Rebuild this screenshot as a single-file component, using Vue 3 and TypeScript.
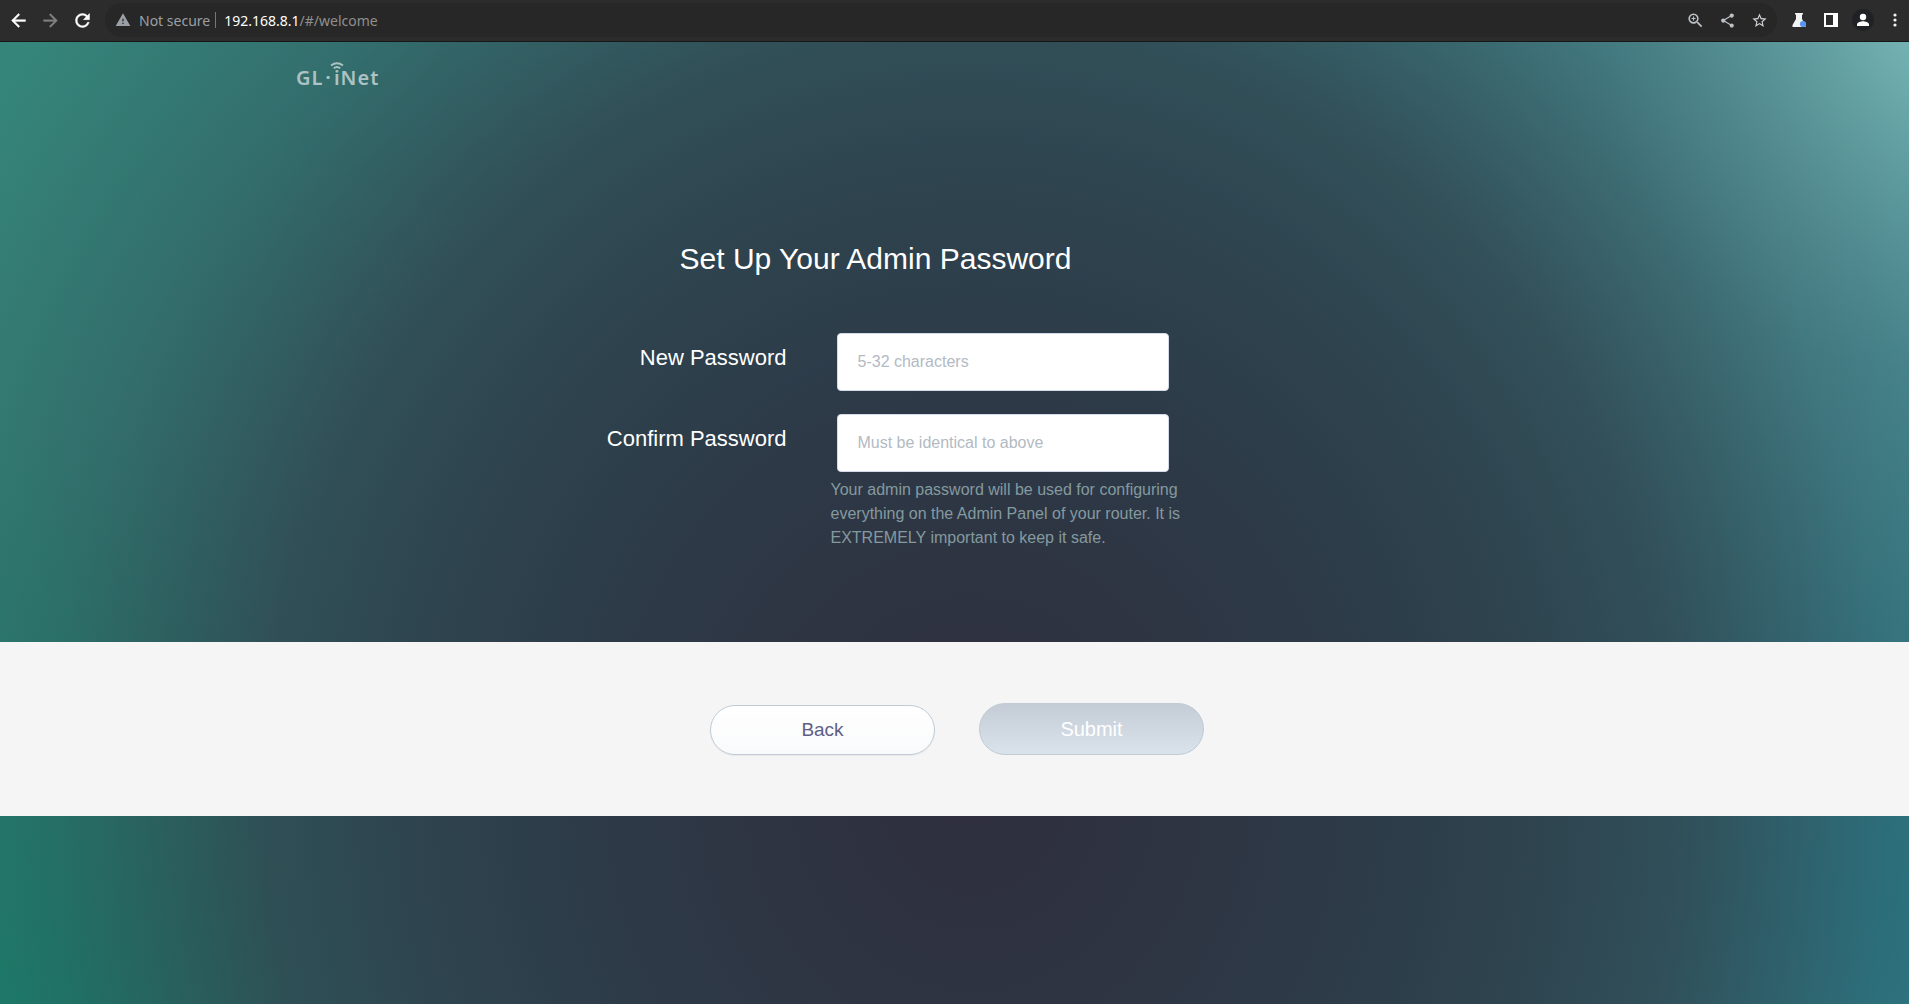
<script setup lang="ts">
import { ref } from 'vue'

const newPassword = ref('')
const confirmPassword = ref('')
</script>

<template>
  <div class="window">
    <nav class="toolbar" aria-label="Browser">
      <button class="tool" type="button" aria-label="Back one page">
        <svg viewBox="0 0 24 24" width="21" height="21"><path d="M20 11H7.83l5.59-5.59L12 4l-8 8 8 8 1.41-1.41L7.83 13H20v-2z" fill="#fff" stroke="#fff" stroke-width=".5" /></svg>
      </button>
      <button class="tool" type="button" aria-label="Forward one page">
        <svg viewBox="0 0 24 24" width="21" height="21"><path d="M4 11h12.17l-5.59-5.59L12 4l8 8-8 8-1.41-1.41L16.17 13H4v-2z" fill="#828282" stroke="#828282" stroke-width=".3" /></svg>
      </button>
      <button class="tool" type="button" aria-label="Reload">
        <svg viewBox="0 0 24 24" width="21" height="21"><path d="M17.65 6.35C16.2 4.9 14.21 4 12 4c-4.42 0-7.99 3.58-7.99 8s3.57 8 7.99 8c3.73 0 6.84-2.55 7.73-6h-2.08c-.82 2.33-3.04 4-5.65 4-3.31 0-6-2.69-6-6s2.69-6 6-6c1.66 0 3.14.69 4.22 1.78L13 11h7V4l-2.35 2.35z" fill="#fff" stroke="#fff" stroke-width=".5" /></svg>
      </button>

      <div class="address">
        <svg viewBox="0 0 24 24" width="16" height="16"><path d="M1 21h22L12 2 1 21zm12-3h-2v-2h2v2zm0-4h-2v-4h2v4z" fill="#9aa0a6" /></svg>
        <span class="security">Not secure</span>
        <span class="divider"></span>
        <span class="url"><b>192.168.8.1</b>/#/welcome</span>
        <button class="tool first" type="button" aria-label="Zoom">
          <svg viewBox="0 0 24 24" width="19" height="19" fill="#bdc1c6"><path d="M15.5 14h-.79l-.28-.27A6.471 6.471 0 0 0 16 9.5 6.5 6.5 0 1 0 9.5 16c1.61 0 3.09-.59 4.23-1.57l.27.28v.79l5 4.99L20.49 19l-4.99-5zm-6 0C7.01 14 5 11.99 5 9.5S7.01 5 9.5 5 14 7.01 14 9.5 11.99 14 9.5 14z" /><path d="M12 10.2h-1.8V12H8.800v-1.800H7V8.800h1.800V7h1.400v1.800H12z" /></svg>
        </button>
        <button class="tool" type="button" aria-label="Share">
          <svg viewBox="0 0 24 24" width="17" height="17" fill="#bdc1c6"><path d="M18 16.08c-.76 0-1.44.3-1.96.77L8.91 12.7c.05-.23.09-.46.09-.7s-.04-.47-.09-.7l7.05-4.11c.54.5 1.25.81 2.04.81 1.66 0 3-1.34 3-3s-1.34-3-3-3-3 1.34-3 3c0 .24.04.47.09.7L8.04 9.81C7.5 9.31 6.79 9 6 9c-1.66 0-3 1.34-3 3s1.34 3 3 3c.79 0 1.5-.31 2.04-.81l7.12 4.16c-.05.21-.08.43-.08.65 0 1.61 1.31 2.92 2.92 2.92s2.92-1.31 2.92-2.92-1.31-2.92-2.92-2.92z" /></svg>
        </button>
        <button class="tool" type="button" aria-label="Bookmark">
          <svg viewBox="0 0 24 24" width="17" height="17" fill="#d0d3d6"><path d="M22 9.24l-7.19-.62L12 2 9.19 8.63 2 9.24l5.46 4.73L5.82 21 12 17.27 18.18 21l-1.63-7.03L22 9.24zM12 15.4l-3.76 2.27 1-4.28-3.32-2.88 4.38-.38L12 6.1l1.71 4.04 4.38.38-3.32 2.88 1 4.28L12 15.4z" /></svg>
        </button>
      </div>

      <button class="tool" type="button" aria-label="Experiments">
        <svg viewBox="0 0 16 16" width="16" height="16"><path d="M4 1h8v1.600h-1V7l3.500 6v2H1.500v-2L5 7V2.600H4z" fill="#f1f3f4" /><circle cx="12" cy="12" r="3.100" fill="#5a97f5" /></svg>
      </button>
      <button class="tool" type="button" aria-label="Side panel">
        <svg viewBox="0 0 14 14" width="14" height="14"><path d="M0 0h14v14H0zM2 2v10h7V2z" fill="#fff" fill-rule="evenodd" /></svg>
      </button>
      <button class="tool" type="button" aria-label="Profile">
        <svg viewBox="0 0 22 22" width="22" height="22"><circle cx="11" cy="11" r="11" fill="#202124" /><circle cx="11" cy="8" r="3.200" fill="#fff" /><path d="M5 17v-1.500c0-2.200 4-3.300 6-3.300s6 1.100 6 3.300V17z" fill="#fff" /></svg>
      </button>
      <button class="tool" type="button" aria-label="Menu">
        <svg viewBox="0 0 16 16" width="16" height="16" fill="#f1f3f4"><circle cx="8" cy="3" r="1.600" /><circle cx="8" cy="8" r="1.600" /><circle cx="8" cy="13" r="1.600" /></svg>
      </button>
    </nav>

    <div class="page">
      <header class="site-header">
        <a class="logo" href="#/welcome">
          <span>G</span><span>L</span><span class="dot">·</span>
          <span class="beacon">i<svg viewBox="0 0 14 7" width="14" height="7" fill="none" stroke="#adc2c2" stroke-width="1.900"><path d="M1 3.500Q7-1 13 3.500M3.800 6.200Q7 3.600 10.200 6.200" /></svg></span>
          <span>N</span><span>e</span><span>t</span>
        </a>
      </header>

      <form id="password-form" class="setup" @submit.prevent>
        <h1>Set Up Your Admin Password</h1>
        <div class="row">
          <label for="new-password">New Password</label>
          <input id="new-password" v-model="newPassword" type="password" placeholder="5-32 characters" />
        </div>
        <div class="row">
          <label for="confirm-password">Confirm Password</label>
          <div class="field">
            <input id="confirm-password" v-model="confirmPassword" type="password" placeholder="Must be identical to above" />
            <p class="hint">Your admin password will be used for configuring everything on the Admin Panel of your router. It is EXTREMELY important to keep it safe.</p>
          </div>
        </div>
      </form>

      <div class="actions">
        <button class="back" type="button">Back</button>
        <button class="submit" type="submit" form="password-form" disabled>Submit</button>
      </div>
    </div>
  </div>
</template>

<style>
body {
  margin: 0;
}
</style>

<style scoped>
* {
  box-sizing: border-box;
}

.window {
  display: flex;
  flex-direction: column;
  min-height: 100vh;
  font-family: "Liberation Sans", Arial, sans-serif;
}

.toolbar {
  display: flex;
  align-items: center;
  height: 42px;
  padding: 0 0 1px 2px;
  background: #2c2c2c;
  border-bottom: 1px solid #171717;
  font-family: "Noto Sans", sans-serif;
  font-size: 14px;
}

.tool {
  display: flex;
  align-items: center;
  justify-content: center;
  flex: none;
  width: 32px;
  height: 32px;
  padding: 0;
  border: 0;
  background: none;
}

.toolbar > .tool:last-child {
  margin-right: -2px;
}

.address {
  display: flex;
  align-items: center;
  flex: 1;
  height: 34px;
  margin: 0 6px 0 7px;
  padding: 0 2px 0 10px;
  border-radius: 17px;
  background: #272727;
  color: #9aa0a6;
}

.security {
  margin-left: 8px;
}

.divider {
  width: 1px;
  height: 16px;
  margin: 0 8px 0 5px;
  background: #777;
}

.url {
  color: #8f8f8f;
}

.url b {
  color: #fff;
  font-weight: 400;
}

.first {
  margin-left: auto;
}

.page {
  flex: 1;
  background:
    radial-gradient(ellipse 58% 126% at 51% 78%, #2e2e3e 0%, #2e3442 19%, #2d3a48 34%, #2e444f 51%, rgba(48, 70, 80, 0.86) 64%, rgba(45, 70, 80, 0.38) 83%, rgba(45, 70, 80, 0) 105%),
    radial-gradient(ellipse 36% 75% at 100% 0%, #74b3b3 0%, rgba(96, 158, 162, 0.5) 45%, rgba(72, 144, 153, 0) 100%),
    radial-gradient(ellipse 50% 60% at 0% 100%, #178a70 0%, rgba(23, 138, 112, 0) 100%),
    radial-gradient(ellipse 40% 60% at 100% 90%, rgba(34, 132, 148, 0.7) 0%, rgba(34, 132, 148, 0) 100%),
    linear-gradient(90deg, #35857a 0%, #3d8c95 100%);
}

.site-header {
  display: flex;
  height: 71px;
  padding: 22px 0 0 15.5%;
}

.logo {
  display: flex;
  gap: 1px;
  color: #adc2c2;
  font-family: "Noto Sans", sans-serif;
  font-size: 20px;
  font-weight: 600;
  line-height: 28px;
  text-decoration: none;
}

.dot {
  padding: 0 2px;
}

.beacon {
  position: relative;
}

.beacon svg {
  position: absolute;
  top: -2px;
  left: -4px;
}

.setup {
  max-width: 704px;
  margin: 0 auto;
  padding: 128px 0 92px;
  color: #fff;
}

h1 {
  margin: 0 0 56px;
  padding-right: 158px;
  font-size: 30px;
  font-weight: 400;
  line-height: 36px;
  text-align: center;
}

.row {
  display: flex;
  align-items: flex-start;
  gap: 50px;
}

.row + .row {
  margin-top: 23px;
}

label {
  width: 184px;
  padding-top: 12px;
  font-size: 22px;
  line-height: 26px;
  text-align: right;
  white-space: nowrap;
}

input {
  display: block;
  width: 332px;
  height: 58px;
  padding: 0 20px;
  border: 1px solid #d3dbea;
  border-radius: 4px;
  background: #fff;
  font-family: inherit;
  font-size: 16px;
}

input::placeholder {
  color: #b3bac3;
}

.hint {
  width: 360px;
  margin: 6px 0 0 -6px;
  color: #849a9f;
  font-size: 16px;
  line-height: 24px;
}

.actions {
  display: flex;
  align-items: flex-end;
  justify-content: center;
  gap: 44px;
  padding: 61px 0 61px 5px;
  background: #f5f5f5;
}

.actions button {
  width: 225px;
  border: 1px solid #c0cbd5;
  border-radius: 26px;
  font-family: inherit;
}

.actions .back {
  height: 50px;
  background: linear-gradient(#fff, #f9fafb);
  box-shadow: 0 1px 1px rgba(0, 0, 0, 0.06);
  color: #5e5e85;
  font-size: 19px;
}

.actions .submit {
  height: 52px;
  background: linear-gradient(#c4ccd6, #dae2eb);
  color: #fff;
  font-size: 20px;
}
</style>
